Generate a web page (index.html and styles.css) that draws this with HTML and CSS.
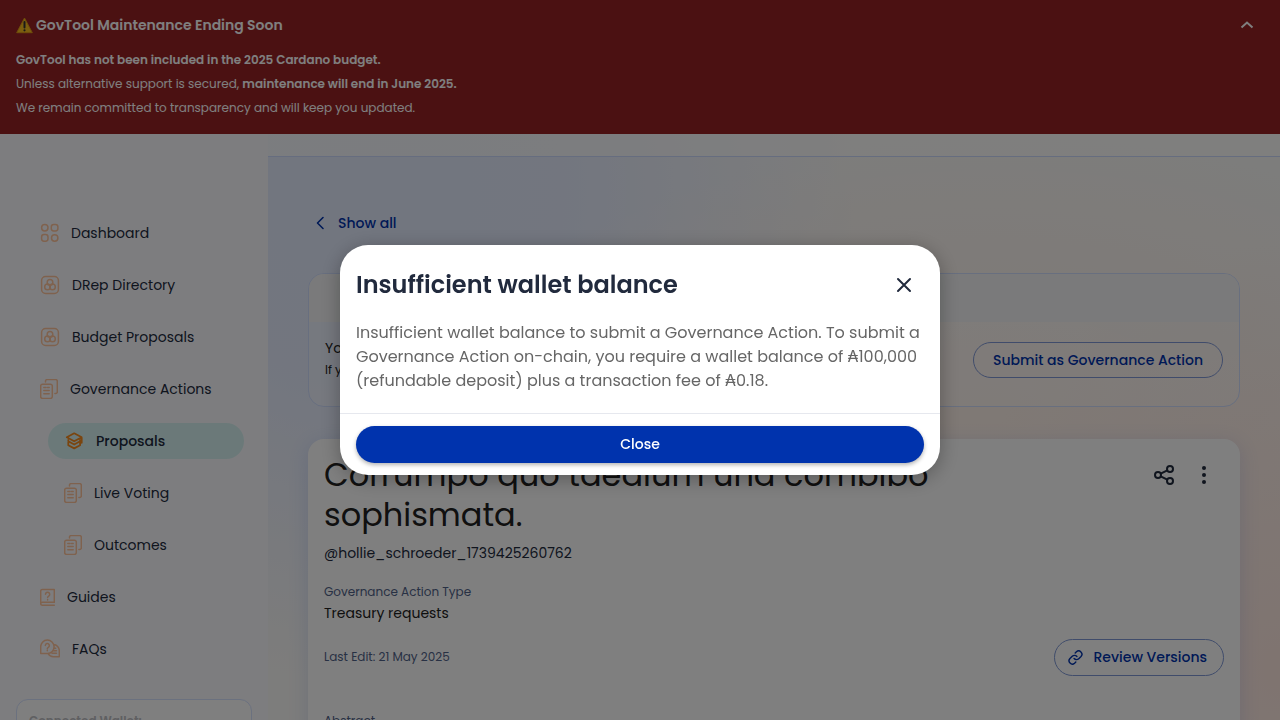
FILE: index.html
```html
<!DOCTYPE html>
<html lang="en">
<head>
<meta charset="utf-8">
<meta name="viewport" content="width=device-width, initial-scale=1">
<title>GovTool</title>
<link rel="stylesheet" href="styles.css">
</head>
<body>
<svg class="defs" aria-hidden="true">
  <symbol id="i-docs" viewBox="0 0 18 20"><path d="M2.500 5.200h8a1.800 1.800 0 0 1 1.800 1.800v10.600a1.800 1.800 0 0 1-1.800 1.800h-8a1.800 1.800 0 0 1-1.800-1.800V7a1.800 1.800 0 0 1 1.800-1.800zM5.500 3V2A1.400 1.400 0 0 1 7 .6h8.700a1.600 1.600 0 0 1 1.600 1.600v10.700a1.600 1.600 0 0 1-1.600 1.600h-.8M3.800 8.500h2.200M7.500 8.500h1.700M3.800 11.500h5.400M3.800 14.800h5.400"/></symbol>
  <symbol id="i-rings" viewBox="0 0 20 20"><rect x="1.600" y="1.600" width="16.800" height="16.800" rx="4"/><circle cx="10" cy="7.400" r="2.800"/><circle cx="7.500" cy="11.900" r="2.800"/><circle cx="12.500" cy="11.900" r="2.800"/></symbol>
</svg>

<header class="banner">
  <div class="banner-head">
    <h2 class="banner-title">
      <svg class="warn" viewBox="0 0 17 17" aria-hidden="true"><path d="M8.500 1 16.300 15.700H.7z" fill="#f7bd1e" stroke="#dd9a16" stroke-linejoin="round"/><path d="M8.500 5v5.500" stroke="#333" stroke-width="2" stroke-linecap="round"/><circle cx="8.500" cy="13.300" r="1.100" fill="#333"/></svg>
      GovTool Maintenance Ending Soon
    </h2>
    <button class="banner-toggle" aria-label="Collapse">
      <svg viewBox="0 0 24 24" aria-hidden="true"><path d="m6.500 14.500 5.500-5 5.500 5"/></svg>
    </button>
  </div>
  <p><strong>GovTool has not been included in the 2025 Cardano budget.</strong></p>
  <p>Unless alternative support is secured, <strong>maintenance will end in June 2025.</strong></p>
  <p>We remain committed to transparency and will keep you updated.</p>
</header>

<div class="layout">
  <aside class="sidebar">
    <nav class="nav">
      <a class="link" href="#"><svg class="w19" viewBox="0 0 19 20"><circle cx="4.800" cy="4.800" r="3.200"/><rect x="11.300" y="1.600" width="6.600" height="6.400" rx="2.400"/><rect x="1.600" y="11.600" width="6.400" height="6.600" rx="2.400"/><circle cx="14.700" cy="15" r="3.200"/></svg>Dashboard</a>
      <a class="link" href="#"><svg class="w20"><use href="#i-rings"/></svg>DRep Directory</a>
      <a class="link" href="#"><svg class="w20"><use href="#i-rings"/></svg>Budget Proposals</a>
      <a class="link" href="#"><svg class="w18"><use href="#i-docs"/></svg>Governance Actions</a>
      <div class="subnav">
        <a class="link active" href="#"><svg class="w20" viewBox="0 0 20 20"><path d="M10.200 2.300 2.800 6.300l7.400 4 7.500-4zM17.700 6.300v5.500M4.300 9v5.200l5.900 3.200 5.900-3.200V9M4.300 10.300l5.900 3.200 5.900-3.200"/></svg>Proposals</a>
        <a class="link" href="#"><svg class="w18"><use href="#i-docs"/></svg>Live Voting</a>
        <a class="link" href="#"><svg class="w18"><use href="#i-docs"/></svg>Outcomes</a>
      </div>
      <a class="link" href="#"><svg class="w15" viewBox="0 0 15 20"><path d="M14.300 15.300V2.500H2.200A1.500 1.500 0 0 0 .7 4v12.600a1.600 1.600 0 0 0 1.600 1.600h12M.7 16.800a1.500 1.500 0 0 1 1.600-1.500h12M5.500 7.300a2.100 2.100 0 1 1 3.200 1.800c-.8.500-1.100.8-1.100 1.400M7.600 12.400v.5"/></svg>Guides</a>
      <a class="link" href="#"><svg class="w20" viewBox="0 0 20 20"><path d="M.7 14.300V8a6.700 6.700 0 1 1 6.800 6.500H.7zM5.300 6.600a2 2 0 1 1 3 1.700c-.8.500-1 .8-1 1.500M7.300 11.300v.5M13.600 5.600a6 6 0 0 1 5.700 6v6.100h-6a6.200 6.200 0 0 1-5.200-3M14 9.200h1.700M13.300 11.700h3.200M12 14.300h4.500"/></svg>FAQs</a>
    </nav>
    <section class="wallet"><h3>Connected Wallet:</h3></section>
  </aside>

  <main class="main">
    <div class="topbar"></div>
    <div class="content">
      <a class="back" href="#"><svg viewBox="0 0 24 24" aria-hidden="true"><path d="m14.500 6.500-5.500 5.500 5.500 5.500"/></svg>Show all</a>

      <section class="notice">
        <div class="notice-strip"></div>
        <div class="notice-body">
          <div>
            <p class="notice-title">You can submit</p>
            <p class="notice-text">If you are ready</p>
          </div>
          <button class="btn outlined submit">Submit as Governance Action</button>
        </div>
      </section>

      <article class="proposal">
        <div class="proposal-head">
          <h1>Corrumpo quo taedium und combibo sophismata.</h1>
          <div class="actions">
            <button aria-label="Share"><svg viewBox="0 0 24 24"><circle cx="18" cy="6" r="3"/><circle cx="6" cy="12" r="3"/><circle cx="18" cy="18" r="3"/><path d="m8.700 10.700 6.600-3.400M8.700 13.300l6.600 3.400"/></svg></button>
            <button aria-label="More"><svg class="dots" viewBox="0 0 24 24"><circle cx="12" cy="5" r="2"/><circle cx="12" cy="12" r="2"/><circle cx="12" cy="19" r="2"/></svg></button>
          </div>
        </div>
        <p class="author">@hollie_schroeder_1739425260762</p>
        <p class="label">Governance Action Type</p>
        <p class="value">Treasury requests</p>
        <div class="edit-row">
          <p class="label">Last Edit: 21 May 2025</p>
          <button class="btn outlined review"><svg viewBox="0 0 24 24" aria-hidden="true"><path d="M10 13.500a4.500 4.500 0 0 0 6.600.2l3.200-3.200a4.600 4.600 0 0 0-6.500-6.500l-1.700 1.700M14 10.500a4.500 4.500 0 0 0-6.600-.2l-3.200 3.200a4.600 4.600 0 0 0 6.500 6.500l1.700-1.700"/></svg>Review Versions</button>
        </div>
        <p class="label abstract">Abstract</p>
      </article>
    </div>
  </main>
</div>

<div class="backdrop">
  <div class="modal" role="dialog" aria-modal="true" aria-labelledby="modal-title">
    <div class="modal-head">
      <h2 id="modal-title">Insufficient wallet balance</h2>
      <button class="modal-x" aria-label="Dismiss"><svg viewBox="0 0 24 24"><path d="M6 6l12 12M18 6 6 18"/></svg></button>
    </div>
    <p class="modal-text">Insufficient wallet balance to submit a Governance Action. To submit a Governance Action on-chain, you require a wallet balance of ₳100,000 (refundable deposit) plus a transaction fee of ₳0.18.</p>
    <div class="modal-foot"><button class="btn primary">Close</button></div>
  </div>
</div>
</body>
</html>
```
FILE: styles.css
```css
* { box-sizing: border-box; }
html { height: 100%; overflow: hidden; }
body {
  margin: 0;
  height: 100%;
  overflow: hidden;
  font-family: Poppins, Inter, "Open Sans", sans-serif;
  font-size: 14px;
  line-height: 20px;
  color: #212a3d;
  background: #fbfbff;
}
h1, h2, h3, p { margin: 0; }
a { color: inherit; text-decoration: none; }
button { font: inherit; color: inherit; background: none; border: 0; padding: 0; }
svg { display: block; flex: none; fill: none; stroke: currentColor; }
.defs { position: absolute; width: 0; height: 0; }

.banner {
  background: #972224;
  color: #fff;
  padding: 5px 16px 14px;
  font-size: 12px;
  line-height: 24px;
}
.banner-head { display: flex; justify-content: space-between; align-items: center; height: 40px; margin-bottom: 3px; }
.banner-title { display: flex; align-items: center; gap: 3px; font-size: 14px; font-weight: 600; }
.banner strong { font-weight: 600; }
.warn { width: 17px; height: 17px; stroke: none; }
.banner-toggle { padding: 0 5px; }
.banner-toggle svg { width: 24px; height: 24px; stroke-width: 2; }

.layout { display: flex; }
.sidebar { width: 268px; flex: none; padding-top: 81px; background: #fbfbff; }
.nav { display: flex; flex-direction: column; gap: 16px; padding: 0 24px; }
.subnav { display: flex; flex-direction: column; gap: 16px; margin-left: 24px; }
.link { display: flex; align-items: center; gap: 12px; height: 36px; padding: 0 16px; border-radius: 18px; }
.link svg { height: 20px; color: #ffc49c; stroke-width: 1.500; stroke-linecap: round; stroke-linejoin: round; }
.link.active { background: #d6f3f3; font-weight: 500; }
.link.active svg { color: #f58a1f; stroke-width: 1.800; }
.w15 { width: 15px; }
.w18 { width: 18px; }
.w19 { width: 19px; }
.w20 { width: 20px; }
.wallet { margin: 32px 16px 0; padding: 11px 12px; height: 120px; border: 1px solid #d6e2ff; border-radius: 12px; background: #fff; }
.wallet h3 { font-size: 12px; font-weight: 600; color: #bfc0c4; }

.main {
  flex: 1;
  min-width: 0;
  background:
    radial-gradient(ellipse 34% 62% at 100% 78%, #ffe8e0 0%, rgba(255, 232, 224, 0) 100%),
    radial-gradient(ellipse 55% 42% at 72% 42%, #fff2ea 0%, rgba(255, 242, 234, 0) 100%),
    radial-gradient(ellipse 48% 72% at 10% 8%, #e4ecff 0%, #e6edff 40%, rgba(230, 237, 255, 0) 100%),
    #fbfaf8;
}
.topbar { height: 23px; border-bottom: 1px solid #ccdaff; background: rgba(255, 255, 255, .7); }
.content { padding: 48px 40px 0; }
.back { display: inline-flex; align-items: center; gap: 5px; height: 36px; color: #0033ad; font-weight: 500; }
.back svg { width: 25px; height: 24px; stroke-width: 1.600; stroke-linejoin: round; stroke-linecap: round; }

.notice { margin-top: 32px; border: 1px solid #d0deff; border-radius: 16px; overflow: hidden; background: rgba(255, 255, 255, .3); }
.notice-strip { height: 48px; background: #f4f5f6; }
.notice-body { display: flex; justify-content: space-between; align-items: center; height: 84px; padding: 0 16px 8px; color: #212121; }
.notice-text { font-size: 12px; line-height: 24px; }

.btn { display: inline-flex; align-items: center; justify-content: center; height: 37px; border-radius: 20px; padding: 0 16px 1px; font-weight: 500; white-space: nowrap; }
.outlined { border: 1px solid #8099d6; color: #0033ad; }
.submit { height: 36px; padding: 0 19px; }
.review { gap: 10px; padding: 0 16px 1px 12px; }
.review svg { width: 17px; height: 17px; stroke-width: 2; stroke-linecap: round; }
.primary { width: 100%; background: #0033ad; color: #fff; box-shadow: 0 2px 4px rgba(0, 0, 0, .3); }

.proposal { margin-top: 32px; padding: 16px; background: #fff; border-radius: 16px; box-shadow: 0 4px 20px rgba(47, 98, 220, .16); }
.proposal-head { display: flex; justify-content: space-between; gap: 160px; }
h1 { font-size: 32px; line-height: 40px; font-weight: 400; color: #212121; }
.actions { display: flex; }
.actions button { width: 40px; height: 40px; padding: 8px; }
.actions svg { width: 24px; height: 24px; stroke-width: 2; }
.actions .dots { fill: currentColor; stroke: none; }
.author { margin: 8px 0 19px; }
.label { font-size: 12px; color: #506288; }
.value { margin-top: 1px; color: #212121; }
.edit-row { display: flex; justify-content: space-between; align-items: center; margin: 16px 0 35px; }
.edit-row .label { padding-bottom: 1px; }
.abstract { padding-bottom: 60px; }

.backdrop { position: fixed; inset: 0; display: flex; align-items: center; justify-content: center; background: rgba(0, 0, 0, .5); }
.modal { width: 600px; max-width: 100%; background: #fff; border-radius: 28px; box-shadow: 0 4px 20px rgba(0, 0, 0, .3); }
.modal-head { display: flex; justify-content: space-between; align-items: center; padding: 20px 16px 16px; }
.modal-head h2 { font-size: 24px; line-height: 32px; font-weight: 600; }
.modal-x { width: 40px; height: 40px; padding: 8px; }
.modal-x svg { width: 24px; height: 24px; stroke-width: 2; stroke-linecap: round; }
.modal-text { padding: 0 16px 20px; font-size: 16px; line-height: 24px; color: #666; }
.modal-foot { padding: 12px 16px; border-top: 1px solid #e6e8ee; }
```
